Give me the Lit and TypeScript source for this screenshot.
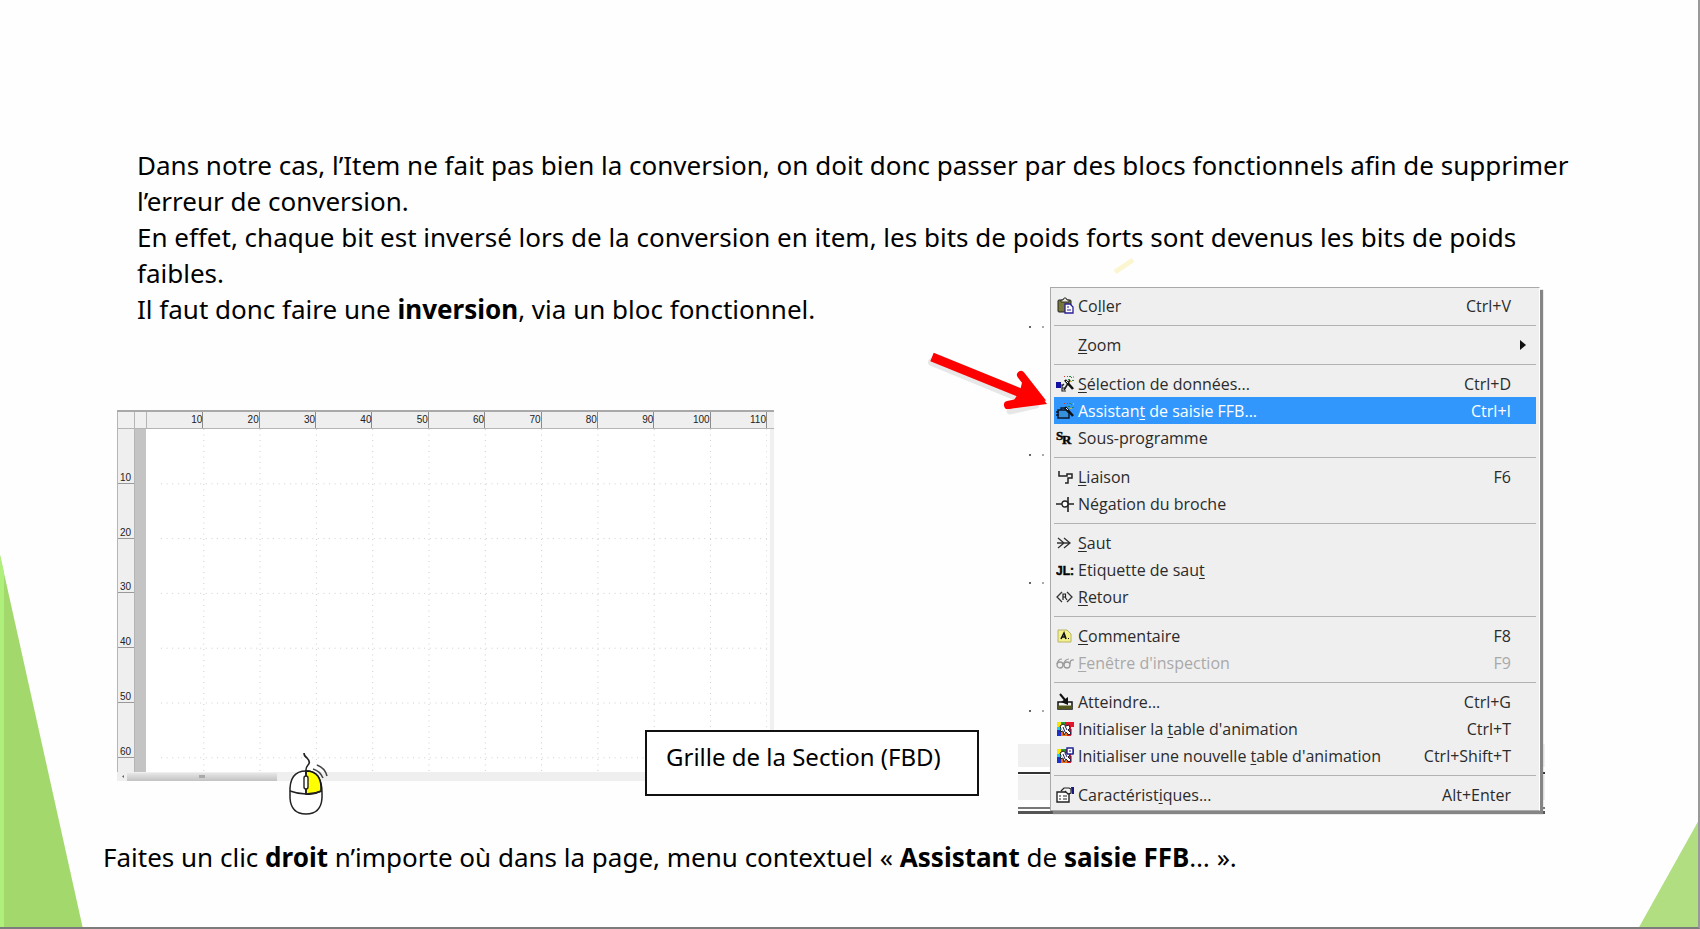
import { LitElement, html, svg, css, nothing, TemplateResult } from "lit";
import { customElement } from "lit/decorators.js";

interface MenuEntry {
  icon?: string;
  before?: string;
  key?: string;
  after?: string;
  shortcut?: string;
  submenu?: boolean;
  active?: boolean;
  disabled?: boolean;
}

const GROUPS: MenuEntry[][] = [
  [{ icon: "paste", before: "Co", key: "l", after: "ler", shortcut: "Ctrl+V" }],
  [{ key: "Z", after: "oom", submenu: true }],
  [
    { icon: "data", key: "S", after: "élection de données...", shortcut: "Ctrl+D" },
    { icon: "wizard", before: "Assistan", key: "t", after: " de saisie FFB...", shortcut: "Ctrl+I", active: true },
    { icon: "sr", before: "Sous-pro", key: "g", after: "ramme" },
  ],
  [
    { icon: "link", key: "L", after: "iaison", shortcut: "F6" },
    { icon: "negate", before: "Négation du broche" },
  ],
  [
    { icon: "jump", key: "S", after: "aut" },
    { icon: "label", before: "Etiquette de sau", key: "t" },
    { icon: "ret", key: "R", after: "etour" },
  ],
  [
    { icon: "comment", key: "C", after: "ommentaire", shortcut: "F8" },
    { icon: "glasses", key: "F", after: "enêtre d'inspection", shortcut: "F9", disabled: true },
  ],
  [
    { icon: "goto", before: "Atteindre...", shortcut: "Ctrl+G" },
    { icon: "table", before: "Initialiser la ", key: "t", after: "able d'animation", shortcut: "Ctrl+T" },
    { icon: "newtable", before: "Initialiser une nouvelle ", key: "t", after: "able d'animation", shortcut: "Ctrl+Shift+T" },
  ],
  [{ icon: "props", before: "Caractérist", key: "i", after: "ques...", shortcut: "Alt+Enter" }],
];

const animationGlyph = svg`
  <path d="M1 2h5v5H1z" fill="#f5e600"/><path d="M1 7h4v3H1z" fill="#22c8e8"/>
  <path d="M5 2h4v3H5z" fill="#2a9d3a"/><path d="M9 2h9v5h-3v9h-4V7H9z" fill="#e3142c"/>
  <path d="M1 10h4v6H1z" fill="#1d2fd0"/><path d="M5 12h6v4H5z" fill="#f07018"/>
  <path d="M4 6l3-2 3 2 3-1 1 3-2 2 3 3-2 2-3-3-2 3-1-4-3 1 1-3z" fill="#fff" stroke="#222" stroke-width="1"/>
  <path d="M7 7l2 5M9 6l2 4M15 9v6" stroke="#1c1c60" fill="none"/>`;

const wand = svg`
  <path d="M9 5l8 9" stroke="#111" stroke-width="2.6"/>
  <path d="M10 6l2 2" stroke="#eee" stroke-width="1"/>
  <path d="M8 1h1v1H8zM15 2h1v1h-1zM11 1h1v1h-1z" fill="#d8322a"/>
  <path d="M13 1h2v1h-2zM12 4h2v1h-2zM16 5h2v1h-2z" fill="#2c8a38"/>
  <path d="M17 1h1v2h-1zM14 6h2v1h-2z" fill="#d9b420"/>`;

const ICONS: Record<string, TemplateResult> = {
  paste: svg`<rect x="2" y="3" width="13" height="12" rx="1" fill="#77773a" stroke="#222"/>
    <path d="M5 5V3h2l1-2h2l1 2h2v2z" fill="#e9e9d8" stroke="#222" stroke-width=".9"/>
    <path d="M9 7h5l3 3v6H9z" fill="#fff" stroke="#2a1f96" stroke-width="1.3"/>
    <path d="M11 10h2M11 13h4" stroke="#2a1f96"/>`,
  data: svg`<path d="M0 7h5v6H0z" fill="#1410a0"/><path d="M5 10h2" stroke="#111"/>
    <path d="M8 9l-2 2v5h4M6 13h4" stroke="#222" fill="none" stroke-width="1.2"/>
    <path d="M8 15L14 5" stroke="#222" stroke-width="1.6"/>${wand}`,
  wizard: svg`<path d="M2 8h8l3 3v5H2z" fill="#3790dc" stroke="#0c1a30" stroke-width="1.5"/>
    <path d="M0 10h3M0 13h3M5 8V6h4v2" stroke="#0c1a30" stroke-width="1.3" fill="none"/>${wand}`,
  sr: svg`<text x="0" y="11" font-family="Liberation Serif, serif" font-weight="700" font-size="13" stroke="#111" stroke-width=".5">S</text>
    <text x="6" y="15" font-family="Liberation Serif, serif" font-weight="700" font-size="13" stroke="#111" stroke-width=".5">R</text>`,
  link: svg`<path d="M3 3v5h8V6h5v4h-4v5H9" fill="none" stroke="#222" stroke-width="1.5"/>`,
  negate: svg`<path d="M0 9h6M12 9h6M12 2v15" fill="none" stroke="#222" stroke-width="1.6"/>
    <circle cx="9" cy="9" r="3" fill="#fff" stroke="#222" stroke-width="1.3"/>`,
  jump: svg`<path d="M2 4l6 5-6 5M8 4l6 5-6 5M1 9h12" fill="none" stroke="#333" stroke-width="1.3"/>`,
  label: svg`<text x="0" y="14" font-family="Liberation Sans, sans-serif" font-weight="700" font-size="12" stroke="#111" stroke-width=".5">JL:</text>`,
  ret: svg`<path d="M6 4L1 9l5 5M11 4l5 5-5 5" fill="none" stroke="#333" stroke-width="1.3"/>
    <path d="M7 12V6h2.500v3H7M9 9l2 3" fill="none" stroke="#222" stroke-width="1.200"/>`,
  comment: svg`<path d="M2 3h9l4 4v8H2z" fill="#f4f08a" stroke="#b7b46c"/>
    <path d="M5 12l3-6 2 6M6 10h4" stroke="#111" stroke-width="1.600" fill="none"/><path d="M12 11h1v1h-1z" fill="#111"/>`,
  glasses: svg`<path d="M1 10q1-5 5-5M7 11q2-6 6-6M14 10q0-5 4-4" fill="none" stroke="#9a9a9a" stroke-width="1.200"/>
    <circle cx="4" cy="11" r="3" fill="none" stroke="#9a9a9a" stroke-width="1.300"/>
    <circle cx="11" cy="11" r="3" fill="none" stroke="#9a9a9a" stroke-width="1.300"/>`,
  goto: svg`<path d="M2 9h14v7H2z" fill="#f4f4f4" stroke="#111" stroke-width="1.500"/><path d="M2 12.500h14V16H2z" fill="#55581c"/>
    <path d="M4 1l5 6" stroke="#111" stroke-width="2"/><path d="M5 9l7-5v8z" fill="#111"/>`,
  table: animationGlyph,
  newtable: svg`${animationGlyph}<path d="M11 1h6v6h-6z" fill="#fff" stroke="#1c2390" stroke-width="1.400"/><path d="M13 4h2" stroke="#1c2390"/>`,
  props: svg`<path d="M1 6h12v10H1z" fill="#fff" stroke="#222" stroke-width="1.400"/>
    <path d="M3 10h2M7 10h4M3 13h2M7 13h4" stroke="#222"/>
    <path d="M5 5l3-3h5l2 1v4l-3 1-3-3" fill="#f2f2f2" stroke="#222" stroke-width="1.200"/>
    <path d="M15 1h3v7h-2z" fill="#1a1a7c"/>`,
};

@customElement("context-menu")
export class ContextMenu extends LitElement {
  static styles = css`
    :host { display: block; }
    .menu {
      background: #efefef;
      border: 1px solid #a9a9a9;
      border-right-color: #fff;
      box-shadow: 3px 3px 1px #858585;
      padding: 4px 3px 2px;
      color: #2b2b2b;
      font-family: "Open Sans", "Noto Sans", sans-serif;
      font-size: 16px;
      line-height: 24px;
    }
    .group + .group { border-top: 1px solid #b2b2b2; margin-top: 6px; padding-top: 5px; }
    .item {
      display: grid;
      grid-template-columns: 18px 1fr auto 6px;
      column-gap: 4px;
      align-items: center;
      width: 100%;
      height: 27px;
      padding: 0 10px 0 2px;
      border: 0;
      background: transparent;
      color: inherit;
      font: inherit;
      text-align: left;
      white-space: nowrap;
    }
    .item .shortcut { margin-right: 5px; }
    .active { background: #3297fd; color: #fff; }
    .disabled { color: #a9a9a9; }
    .icon { display: block; width: 18px; height: 18px; }
    .arrow { display: block; width: 6px; height: 10px; }
    u { text-decoration-thickness: 1px; text-underline-offset: 2px; }
  `;

  private entry(e: MenuEntry) {
    return html`<button role="menuitem" ?disabled=${e.disabled}
      class="item ${e.active ? "active" : ""} ${e.disabled ? "disabled" : ""}">
      <svg class="icon" viewBox="0 0 18 18" aria-hidden="true">${e.icon ? ICONS[e.icon] : nothing}</svg>
      <span>${e.before ?? ""}${e.key ? html`<u>${e.key}</u>` : nothing}${e.after ?? ""}</span>
      <span class="shortcut">${e.shortcut ?? ""}</span>
      ${e.submenu ? html`<svg class="arrow" viewBox="0 0 6 10" aria-hidden="true"><path d="M0 0l6 5-6 5z" fill="#111"/></svg>` : html`<span></span>`}
    </button>`;
  }

  render() {
    return html`<div class="menu" role="menu">
      ${GROUPS.map((g) => html`<div class="group" role="group">${g.map((e) => this.entry(e))}</div>`)}
    </div>`;
  }
}

@customElement("section-grid")
export class SectionGrid extends LitElement {
  static styles = css`
    :host { display: block; }
    .frame {
      display: grid;
      grid-template-columns: 18px 12px 1fr 7px;
      grid-template-rows: 17px 343px 9px;
      border-top: 2px solid #a9a9a9;
      font: 10px/12px "Liberation Sans", sans-serif;
      color: #222;
    }
    .corner { background: #f0f0f0; border: solid #b5b5b5; border-width: 0 1px 1px; box-sizing: border-box; }
    .corner + .corner { border-left: 0; }
    .top { display: grid; grid-template-columns: repeat(11, 1fr); background: #efefef; border-bottom: 1px solid #b5b5b5; }
    .top span { border-right: 1px solid #8c8c8c; text-align: right; padding-top: 2px; }
    .end { background: #efefef; border-bottom: 1px solid #b5b5b5; }
    .side {
      display: grid;
      grid-template-rows: repeat(6, 1fr) 14px;
      background: #efefef;
      border: solid #b5b5b5;
      border-width: 0 1px;
    }
    .side span { display: flex; align-items: flex-end; justify-content: flex-end; padding-right: 3px; border-bottom: 1px solid #999; line-height: 10px; }
    .margin { background: #c4c4c4; margin-right: 1px; }
    .canvas { width: 100%; height: 100%; background: #fff; display: block; }
    .vbar { background: #f0f0f0; margin: 0 0 0 3px; }
    .hbar { grid-column: 1 / -1; display: flex; align-items: center; background: #efefef; }
    .left { width: 10px; height: 9px; }
    .knob { width: 150px; height: 8px; background: linear-gradient(#e6e6e6, #c2c2c2); display: flex; align-items: center; justify-content: center; }
    .grip { width: 6px; height: 3px; background: #a9a9a9; }
  `;

  render() {
    const cols = Array.from({ length: 11 }, (_, i) => i + 1);
    const rows = Array.from({ length: 6 }, (_, i) => i + 1);
    return html`<div class="frame">
      <div class="corner"></div><div class="corner"></div>
      <div class="top">${cols.map((c) => html`<span>${c * 10}</span>`)}</div>
      <div class="end"></div>
      <div class="side">${rows.map((r) => html`<span>${r * 10}</span>`)}</div>
      <div class="margin"></div>
      <svg class="canvas" viewBox="0 0 620 343" preserveAspectRatio="none" aria-hidden="true">
        ${cols.map((c) => svg`<path d="M${c * 56.3 + 0.5} 0V343" stroke="#cdcdcd" stroke-dasharray="1 4.5" fill="none"/>`)}
        ${rows.map((r) => svg`<path d="M14 ${r * 54.8}H620" stroke="#cfcfcf" stroke-dasharray="1 4.6" fill="none"/>`)}
      </svg>
      <div class="vbar"></div>
      <div class="hbar">
        <svg class="left" viewBox="0 0 10 9" aria-hidden="true"><path d="M7 3v3L5 4.500z" fill="#666"/></svg>
        <div class="knob"><div class="grip"></div></div>
      </div>
    </div>`;
  }
}

@customElement("app-root")
export class AppRoot extends LitElement {
  static styles = css`
    :host { display: block; }
    .slide {
      position: relative;
      box-sizing: border-box;
      min-height: 100vh;
      overflow: hidden;
      padding: 147px 100px 40px 103px;
      background: #fefefe;
      color: #000;
      font-family: "Noto Sans", sans-serif;
      font-size: 26px;
      line-height: 36px;
    }
    p { margin: 0; }
    .intro { margin-left: 34px; }
    .lead { margin-left: 20px; }
    .row { display: grid; grid-template-columns: 862fr 527fr; column-gap: 39px; margin: 0 55px 0 14px; align-items: start; }
    .figure { position: relative; margin: 83px 0 0; }
    .board { margin-right: 205px; }
    .caption {
      position: absolute;
      right: 0;
      bottom: -15px;
      box-sizing: border-box;
      width: 334px;
      height: 66px;
      padding: 7px 19px;
      border: 2px solid #111;
      background: #fff;
      font-size: 24px;
      white-space: nowrap;
    }
    .mouse { position: absolute; left: 171px; bottom: -35px; width: 42px; height: 64px; }
    .shot { position: relative; margin: -4px 0 0; padding: 0 5px 0 32px; }
    .behind { position: absolute; inset: auto 0 -3px 0; height: 70px; width: 100%; }
    .dots { position: absolute; left: 10px; top: 38px; width: 18px; height: 390px; }
    .menu { position: relative; }
    .arrow { position: absolute; left: -94px; top: 60px; width: 130px; height: 76px; }
    .spark { position: absolute; left: 95px; top: -30px; width: 24px; height: 18px; }
    .outro { margin-top: 28px; }
    .left, .right { position: absolute; bottom: 0; }
    .left { left: 0; width: 83px; height: 374px; }
    .right { right: 0; width: 62px; height: 111px; }
    .edge { position: absolute; inset: 0; border: solid #7c7c7c; border-width: 0 2px 2px 0; border-right-color: #999; pointer-events: none; }
  `;

  render() {
    return html`<main class="slide">
      <svg class="left" viewBox="0 0 83 374" preserveAspectRatio="none" aria-hidden="true">
        <path d="M0 0L83 374H0z" fill="#a2d86c"/><path d="M0 0L4 18V374H0z" fill="#aef07b"/>
      </svg>
      <svg class="right" viewBox="0 0 62 111" preserveAspectRatio="none" aria-hidden="true">
        <path d="M62 0V111H0z" fill="#b0de81"/>
      </svg>
      <div class="intro">
        <p>Dans notre cas, l’Item ne fait pas bien la conversion, on doit donc passer par des blocs fonctionnels afin de supprimer l’erreur de conversion.</p>
        <p>En effet, chaque bit est inversé lors de la conversion en item, les bits de poids forts sont devenus les bits de poids faibles.</p>
      </div>
      <div class="row">
        <div>
          <p class="lead">Il faut donc faire une <b>inversion</b>, via un bloc fonctionnel.</p>
          <figure class="figure">
            <section-grid class="board"></section-grid>
            <figcaption class="caption">Grille de la Section (FBD)</figcaption>
            <svg class="mouse" viewBox="0 0 42 64" aria-hidden="true">
              <path d="M2 41Q1 19 18 19Q34 19 34 41V46Q33 62 18 62Q3 62 2 46z" fill="#fff" stroke="#222" stroke-width="1.500"/>
              <path d="M18 19Q34 19 33 39Q26 43 18 42z" fill="#ff0" stroke="#111" stroke-width="1.500"/>
              <path d="M2 39Q18 45 34 39M18 19v24" fill="none" stroke="#222" stroke-width="1.500"/>
              <rect x="16" y="24" width="4" height="13" rx="2" fill="#fff" stroke="#222" stroke-width="1.400"/>
              <path d="M16 1q0 3 3 5q4 4 1 7q-3 3-2 9" fill="none" stroke="#222" stroke-width="1.600"/>
              <path d="M25 17q7 2 10 9M29 13q8 3 10 11" fill="none" stroke="#444" stroke-width="1.500"/>
            </svg>
          </figure>
        </div>
        <figure class="shot">
          <svg class="behind" viewBox="0 0 527 70" preserveAspectRatio="none" aria-hidden="true">
            <path d="M0 0H527V23H0zM0 31H527V56H0z" fill="#efefef"/>
            <path d="M0 28H527V30H0z" fill="#333"/>
            <path d="M0 63H527V65H0z" fill="#777"/><path d="M0 67H527V70H0z" fill="#555"/>
          </svg>
          <svg class="dots" viewBox="0 0 18 390" aria-hidden="true">
            ${[1, 129, 257, 385].map((y) => svg`<path d="M1 ${y}h2v2h-2z" fill="#666"/><path d="M14 ${y}h2v2h-2z" fill="#aaa"/>`)}
          </svg>
          <svg class="spark" viewBox="0 0 24 18" aria-hidden="true"><path d="M2 15L20 3" stroke="#fbf6cf" stroke-width="5"/></svg>
          <context-menu class="menu"></context-menu>
          <svg class="arrow" viewBox="0 0 130 76" aria-hidden="true">
            <g fill="none" stroke="#000" stroke-opacity=".09" stroke-linecap="round"><path d="M8 15L98 52" stroke-width="8"/><path d="M86 64L112 58" stroke-width="7"/></g>
            <path d="M8 10L104 49" stroke="#fe0000" stroke-width="9"/>
            <path d="M97 28L115 51L84 58" fill="none" stroke="#fe0000" stroke-width="8" stroke-linecap="round"/>
            <path d="M100 27L123 57L84 62L96 44z" fill="#fe0000"/>
          </svg>
        </figure>
      </div>
      <p class="outro">Faites un clic <b>droit</b> n’importe où dans la page, menu contextuel « <b>Assistant</b> de <b>saisie FFB</b>… ».</p>
      <div class="edge"></div>
    </main>`;
  }
}
